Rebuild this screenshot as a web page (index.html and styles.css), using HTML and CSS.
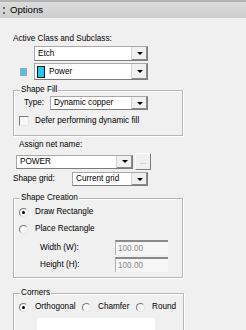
FILE: index.html
```html
<!DOCTYPE html>
<html>

<head>
    <title>Options</title>
    <link rel="stylesheet" href="styles.css">
</head>

<body>
    <div class="titlebar">
        <span class="grip"></span>
        <span class="title">Options</span>
    </div>

    <div class="panel">
        <div class="label label-active">Active Class and Subclass:</div>
        <div class="combo combo-etch">
            <span class="combo-text">Etch</span>
            <span class="drop"><i class="arrow"></i></span>
        </div>
        <div class="row row-power">
            <span class="swatch"></span>
            <div class="combo combo-power">
                <span class="combo-text"><span class="color-box"></span>Power</span>
                <span class="drop"><i class="arrow"></i></span>
            </div>
        </div>

        <fieldset class="group group-fill">
            <legend>Shape Fill</legend>
            <div class="row row-type">
                <span class="type-label">Type:</span>
                <div class="combo combo-type">
                    <span class="combo-text">Dynamic copper</span>
                    <span class="drop"><i class="arrow"></i></span>
                </div>
            </div>
            <div class="row row-check">
                <span class="checkbox"></span>
                <span>Defer performing dynamic fill</span>
            </div>
        </fieldset>

        <div class="label label-net">Assign net name:</div>
        <div class="row row-net">
            <div class="combo combo-net">
                <span class="combo-text">POWER</span>
                <span class="drop"><i class="arrow"></i></span>
            </div>
            <span class="button-more">...</span>
        </div>
        <div class="row row-grid">
            <span class="grid-label">Shape grid:</span>
            <div class="combo combo-grid">
                <span class="combo-text">Current grid</span>
                <span class="drop"><i class="arrow"></i></span>
            </div>
        </div>

        <fieldset class="group group-creation">
            <legend>Shape Creation</legend>
            <div class="row radio-row radio-draw">
                <span class="radio checked"></span>
                <span>Draw Rectangle</span>
            </div>
            <div class="row radio-row radio-place">
                <span class="radio"></span>
                <span>Place Rectangle</span>
            </div>
            <div class="row size-row size-width">
                <span class="size-label">Width (W):</span>
                <span class="size-input">100.00</span>
            </div>
            <div class="row size-row size-height">
                <span class="size-label">Height (H):</span>
                <span class="size-input">100.00</span>
            </div>
        </fieldset>

        <fieldset class="group group-corners">
            <legend>Corners</legend>
            <div class="row corner-row">
                <span class="corner corner-ortho"><span class="radio checked"></span>Orthogonal</span>
                <span class="corner corner-chamfer"><span class="radio"></span>Chamfer</span>
                <span class="corner corner-round"><span class="radio"></span>Round</span>
            </div>
            <div class="preview"></div>
        </fieldset>
    </div>
</body>

</html>
```

FILE: styles.css
```css
html,
body {
    margin: 0;
    padding: 0;
    width: 246px;
    height: 330px;
    overflow: hidden;
}

body {
    background-color: #f0f0f0;
    font-family: "Liberation Sans", Arial, sans-serif;
    font-size: 8.2px;
    line-height: 10px;
    color: #000;
}

.titlebar {
    height: 18px;
    box-sizing: border-box;
    border-top: 2px solid #b4b4b4;
    background: linear-gradient(to bottom, #dcdcdc, #cdcdcd);
    display: flex;
    align-items: center;
}

.grip {
    width: 2px;
    height: 7px;
    margin-left: 3px;
    border-left: 2px dotted #6a6a6a;
    box-sizing: border-box;
}

.title {
    margin-left: 5px;
    font-size: 9.6px;
}

.panel {
    padding-left: 13px;
}

.row {
    display: flex;
    align-items: center;
}

.label-active {
    margin-top: 16px;
}

/* combo boxes */
.combo {
    display: flex;
    box-sizing: border-box;
    background: #fff;
    border: 1px solid;
    border-color: #a8a8a8 #7c7c7c #7c7c7c #a8a8a8;
}

.combo-text {
    flex: 1;
    display: flex;
    align-items: center;
    padding-left: 3px;
    white-space: nowrap;
    overflow: hidden;
}

.drop {
    width: 15px;
    display: flex;
    align-items: center;
    justify-content: center;
    background: #f0f0f0;
    border-left: 1px solid #d4d4d4;
    box-shadow: inset -1px -1px 0 #8a8a8a;
}

.arrow {
    width: 0;
    height: 0;
    border-left: 3px solid transparent;
    border-right: 3px solid transparent;
    border-top: 3px solid #000;
}

.combo-etch {
    width: 114px;
    height: 15px;
    margin-top: 2px;
    margin-left: 21px;
}

.row-power {
    margin-top: 2px;
    height: 17px;
}

.swatch {
    width: 7px;
    height: 8px;
    margin-left: 7px;
    box-sizing: border-box;
    background: #58c0e2;
    border: 1px solid #8aa8b8;
}

.combo-power {
    width: 114px;
    height: 17px;
    margin-left: 7px;
}

.color-box {
    width: 8px;
    height: 12px;
    margin-left: 2px;
    margin-right: 4px;
    box-sizing: border-box;
    background: #19cdee;
    border: 1px solid #1a1a1a;
}

.combo-power .combo-text {
    padding-left: 0;
}

/* group boxes */
.group {
    box-sizing: border-box;
    width: 170px;
    margin: 0;
    padding: 0;
    border: 1px solid #b6b6b6;
    box-shadow: 1px 1px 0 #fff, inset 1px 1px 0 #fff;
}

.group legend {
    margin-left: 6px;
    padding: 0 1px;
    line-height: 10px;
}

.group-fill {
    margin-top: 5px;
    height: 51px;
}

.row-type {
    margin-top: 1px;
    height: 14px;
}

.type-label {
    width: 26px;
    margin-left: 10px;
}

.combo-type {
    width: 98px;
    height: 14px;
}

.row-check {
    margin-top: 5px;
    height: 12px;
}

.checkbox {
    width: 10px;
    height: 10px;
    margin-left: 5px;
    margin-right: 6px;
    box-sizing: border-box;
    background: #f8f8f8;
    border: 1px solid;
    border-color: #7a7a7a #e6e6e6 #e6e6e6 #7a7a7a;
}

.label-net {
    margin-top: 4px;
    margin-left: 6px;
}

.row-net {
    margin-top: 3px;
    height: 17px;
}

.combo-net {
    width: 117px;
    height: 14px;
    margin-left: 3px;
}

.button-more {
    width: 16px;
    height: 17px;
    margin-left: 2px;
    box-sizing: border-box;
    display: flex;
    align-items: center;
    justify-content: center;
    color: #9a9a9a;
    background: #f0f0f0;
    border: 1px solid;
    border-color: #fff #7c7c7c #7c7c7c #fff;
}

.row-grid {
    margin-top: 2px;
    height: 14px;
}

.grid-label {
    width: 59px;
}

.combo-grid {
    width: 76px;
    height: 14px;
}

/* shape creation */
.group-creation {
    margin-top: 7px;
    height: 85px;
}

.radio-row {
    height: 10px;
}

.radio-draw {
    margin-top: 4px;
}

.radio-place {
    margin-top: 7px;
}

.radio {
    width: 9px;
    height: 9px;
    margin-left: 5px;
    margin-right: 7px;
    box-sizing: border-box;
    border-radius: 50%;
    background: #f8f8f8;
    border: 1px solid;
    border-color: #7a7a7a #e4e4e4 #e4e4e4 #7a7a7a;
    display: flex;
    align-items: center;
    justify-content: center;
}

.radio.checked::after {
    content: "";
    width: 3px;
    height: 3px;
    border-radius: 50%;
    background: #000;
}

.size-row {
    height: 15px;
}

.size-width {
    margin-top: 6px;
}

.size-height {
    margin-top: 2px;
}

.size-label {
    width: 75px;
    margin-left: 26px;
}

.size-input {
    width: 53px;
    height: 15px;
    box-sizing: border-box;
    padding-left: 2px;
    display: flex;
    align-items: center;
    color: #8c8c8c;
    background: #f6f6f6;
    border-top: 2px solid #8a8a8a;
    border-left: 1px solid #b0b0b0;
}

/* corners, running past the bottom of the panel */
.group-corners {
    margin-top: 10px;
    width: 171px;
    height: 43px;
    border-bottom: none;
}

.corner-row {
    margin-top: 4px;
    height: 10px;
}

.corner {
    display: flex;
    align-items: center;
    white-space: nowrap;
}

.corner-ortho {
    width: 63px;
}

.corner-chamfer {
    width: 54px;
}

.preview {
    width: 118px;
    height: 15px;
    margin-top: 6px;
    margin-left: 23px;
    background: #fff;
}
```
